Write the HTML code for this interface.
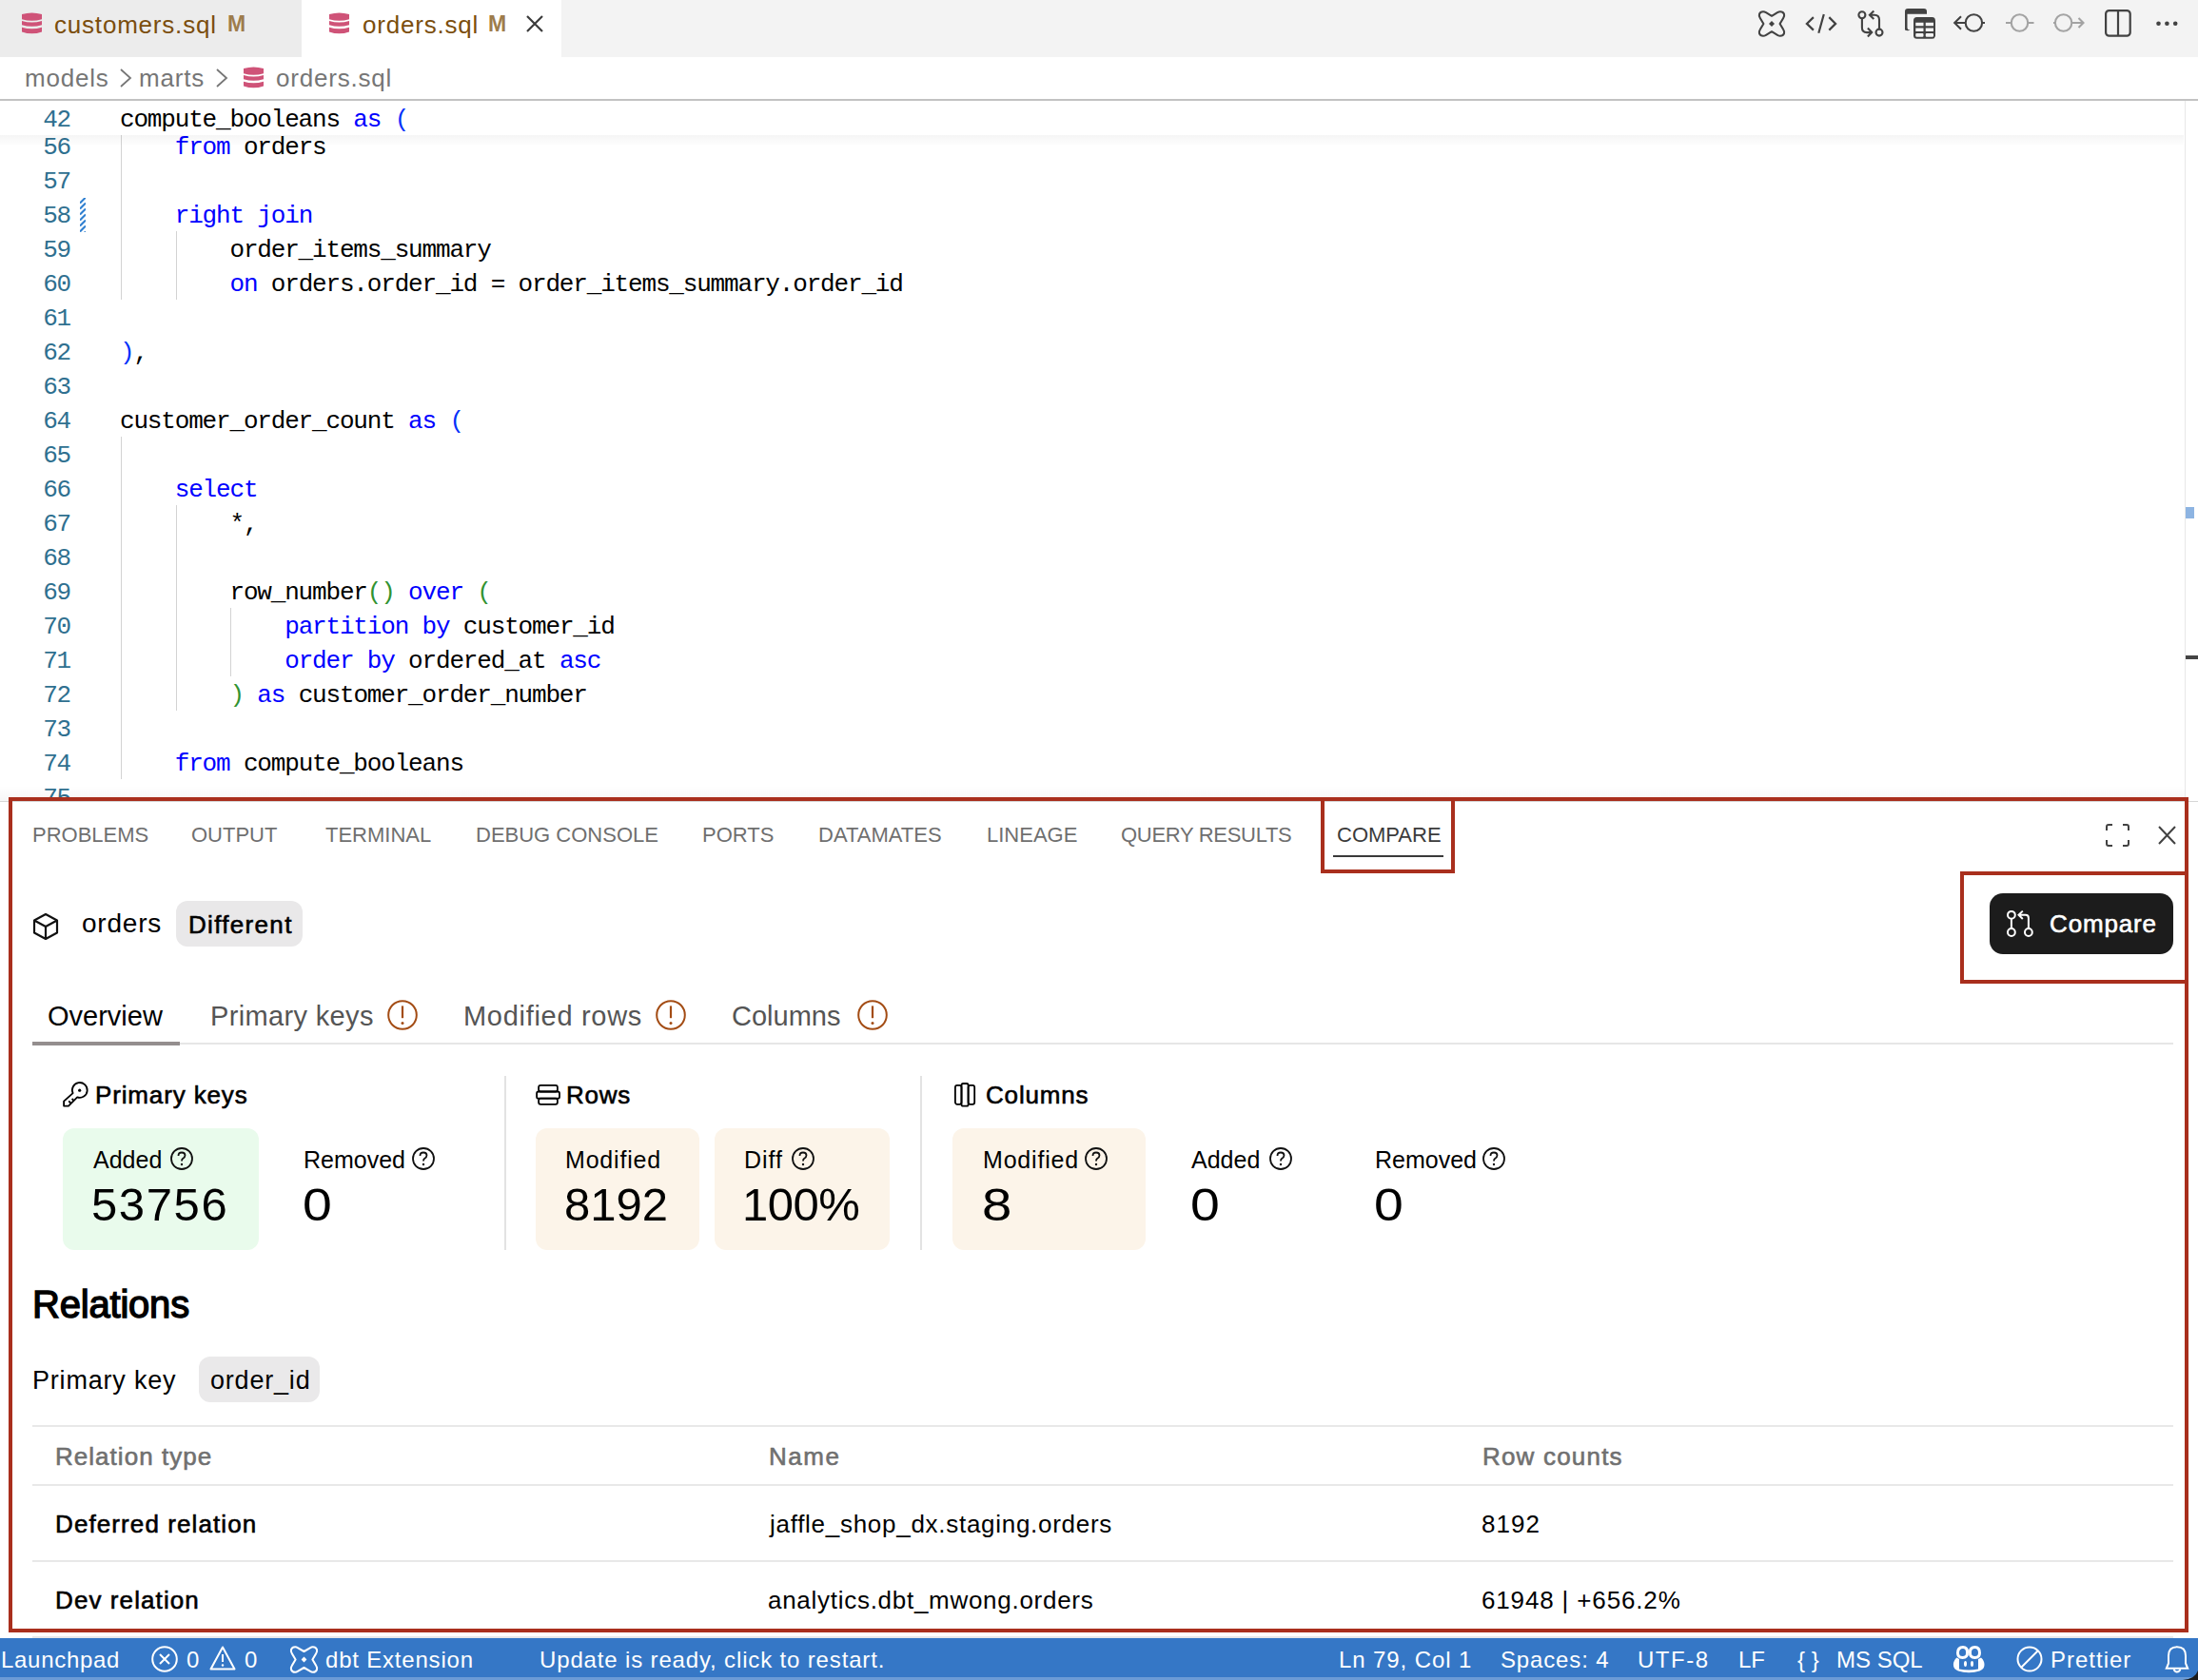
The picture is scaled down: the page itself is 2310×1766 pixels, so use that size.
<!DOCTYPE html>
<html><head><meta charset="utf-8">
<style>
html,body{margin:0;padding:0;}
body{width:2310px;height:1766px;position:relative;overflow:hidden;background:#fff;font-family:"Liberation Sans",sans-serif;}
.a{position:absolute;}
.t{position:absolute;white-space:pre;line-height:1;}
.m{font-family:"Liberation Mono",monospace;}
svg{position:absolute;overflow:visible;}
/* code */
.ln{position:absolute;left:0;margin-top:2px;width:74px;text-align:right;letter-spacing:-1.17px;font:26px/36px "Liberation Mono",monospace;color:#2f7090;white-space:pre;}
.cd{position:absolute;left:126px;margin-top:2px;letter-spacing:-1.17px;font:26px/36px "Liberation Mono",monospace;color:#000;white-space:pre;}
.sb{-webkit-text-stroke:0.6px currentColor}
.k{color:#0000ff}
.p1{color:#0431fa}
.p2{color:#319331}
.g{position:absolute;width:1px;background:#d3d3d3;}
</style></head>
<body>

<!-- ============ TAB BAR ============ -->
<div class="a" style="left:0;top:0;width:2310px;height:60px;background:#f3f3f3"></div>
<div class="a" style="left:0;top:0;width:317px;height:60px;background:#ececec"></div>
<div class="a" style="left:317px;top:0;width:273px;height:60px;background:#ffffff"></div>

<!-- db icon tab1 -->
<svg style="left:23px;top:13px" width="21" height="23" viewBox="0 0 21 23"><g fill="#cf5378"><path d="M0 2Q10.5 -1.2 21 2V7.3Q10.5 10.3 0 7.3Z"/><path d="M0 8.9Q10.5 11.9 21 8.9V13.2Q10.5 16.4 0 13.2Z"/><path d="M0 15.8Q10.5 18.8 21 15.8V20.4Q10.5 24.3 0 20.4Z"/></g></svg>
<div class="t" style="left:57px;top:13px;font-size:26px;color:#7b4e0e;letter-spacing:0.8px">customers.sql</div>
<div class="t" style="left:239px;top:14px;font-size:23px;font-weight:bold;color:#9e7c4c">M</div>

<svg style="left:346px;top:13px" width="21" height="23" viewBox="0 0 21 23"><g fill="#cf5378"><path d="M0 2Q10.5 -1.2 21 2V7.3Q10.5 10.3 0 7.3Z"/><path d="M0 8.9Q10.5 11.9 21 8.9V13.2Q10.5 16.4 0 13.2Z"/><path d="M0 15.8Q10.5 18.8 21 15.8V20.4Q10.5 24.3 0 20.4Z"/></g></svg>
<div class="t" style="left:381px;top:13px;font-size:26px;color:#7b4e0e;letter-spacing:0.8px">orders.sql</div>
<div class="t" style="left:513px;top:14px;font-size:23px;font-weight:bold;color:#9e7c4c">M</div>
<svg style="left:553px;top:16px" width="18" height="18" viewBox="0 0 18 18"><path d="M1 1L17 17M17 1L1 17" stroke="#3b3b3b" stroke-width="2.2"/></svg>

<!-- right toolbar icons -->
<svg style="left:1848px;top:11px" width="28" height="28" viewBox="0 0 28 28" fill="none" stroke="#424242" stroke-width="2.1" stroke-linejoin="round">
 <path d="M5 1.2Q2 1.2 1 3.8Q0.4 5.8 1.8 8L5.4 14L1.8 20Q0.4 22.2 1 24.2Q2 26.8 5 26.8Q6.4 26.8 8 25.8L14 22.2L20 25.8Q21.6 26.8 23 26.8Q26 26.8 27 24.2Q27.6 22.2 26.2 20L22.6 14L26.2 8Q27.6 5.8 27 3.8Q26 1.2 23 1.2Q21.6 1.2 20 2.2L14 5.8L8 2.2Q6.4 1.2 5 1.2Z"/>
 <path d="M14 11L17 14L14 17L11 14Z" fill="#424242" stroke="none"/>
</svg>
<svg style="left:1898px;top:10px" width="34" height="28" viewBox="0 0 34 28" fill="none" stroke="#424242" stroke-width="2.2">
 <path d="M7.9 8.1L0.9 14.9L7.9 21.6M24.3 8.1L31.1 14.9L24.3 21.6M18.8 5L13.3 24.8"/>
</svg>
<svg style="left:1950px;top:10px" width="32" height="30" viewBox="0 0 32 30" fill="none" stroke="#424242" stroke-width="2.1">
 <circle cx="6.9" cy="5.8" r="3.5"/><circle cx="25" cy="24.1" r="3.5"/>
 <path d="M6.9 9.3V19Q6.9 24.1 12 24.1H16.6M12.9 19.6L17.2 24.1L12.9 28.4"/>
 <path d="M25 20.6V10.8Q25 5.8 20 5.8H15M19.3 1.5L14.9 5.8L19.3 10.1"/>
</svg>
<svg style="left:2002px;top:9px" width="34" height="34" viewBox="0 0 34 34">
 <path d="M0 22.5V3Q0 0 3 0H20Q23 0 23 3V5.75H2.5V20Q2.5 22.5 5.5 22.5V22.5Q3 24 0 22.5Z" fill="#424242"/>
 <rect x="9" y="9" width="23" height="22.75" rx="3.5" fill="#424242"/>
 <g fill="#f3f3f3"><rect x="11.25" y="14.75" width="8.25" height="3.5"/><rect x="21.75" y="14.75" width="8.25" height="3.5"/><rect x="11.25" y="20.5" width="8.25" height="3.5"/><rect x="21.75" y="20.5" width="8.25" height="3.5"/><rect x="11.25" y="26" width="8.25" height="3.75" rx="1"/><rect x="21.75" y="26" width="8.25" height="3.75" rx="1"/></g>
</svg>
<svg style="left:2050px;top:10px" width="40" height="28" viewBox="0 0 40 28" fill="none" stroke="#424242" stroke-width="2.1">
 <circle cx="24.4" cy="14" r="8.7"/><path d="M15.7 14H4.5M11 7.2L4.2 14L11 20.8M33.1 14H36"/>
</svg>
<svg style="left:2104px;top:10px" width="40" height="28" viewBox="0 0 40 28" fill="none" stroke="#a3a3a3" stroke-width="2.1">
 <circle cx="18.5" cy="14" r="8.7"/><path d="M9.8 14H4M27.2 14H33.5"/>
</svg>
<svg style="left:2154px;top:10px" width="40" height="28" viewBox="0 0 40 28" fill="none" stroke="#a3a3a3" stroke-width="2.1">
 <circle cx="14.6" cy="14" r="8.7"/><path d="M5.9 14H4M23.3 14H35.5M30.5 9L35.5 14L30.5 19"/>
</svg>
<svg style="left:2212px;top:10px" width="28" height="30" viewBox="0 0 28 30" fill="none" stroke="#424242" stroke-width="2.2">
 <rect x="1.1" y="1.1" width="25.6" height="26.6" rx="3.5"/><path d="M14 1.1V27.7"/>
</svg>
<svg style="left:2264px;top:20px" width="26" height="10" viewBox="0 0 26 10" fill="#424242">
 <circle cx="4.5" cy="4.7" r="2.3"/><circle cx="13.4" cy="4.7" r="2.3"/><circle cx="22.2" cy="4.7" r="2.3"/>
</svg>

<!-- ============ BREADCRUMBS ============ -->
<div class="t" style="left:26px;top:69px;font-size:26px;color:#767676;letter-spacing:0.8px">models</div>
<svg style="left:126px;top:72px" width="12" height="20" viewBox="0 0 12 20" fill="none" stroke="#767676" stroke-width="1.8"><path d="M1 1L11 10L1 19"/></svg>
<div class="t" style="left:146px;top:69px;font-size:26px;color:#767676;letter-spacing:0.8px">marts</div>
<svg style="left:227px;top:72px" width="12" height="20" viewBox="0 0 12 20" fill="none" stroke="#767676" stroke-width="1.8"><path d="M1 1L11 10L1 19"/></svg>
<svg style="left:256px;top:70px" width="21" height="23" viewBox="0 0 21 23"><g fill="#cf5378"><path d="M0 2Q10.5 -1.2 21 2V7.3Q10.5 10.3 0 7.3Z"/><path d="M0 8.9Q10.5 11.9 21 8.9V13.2Q10.5 16.4 0 13.2Z"/><path d="M0 15.8Q10.5 18.8 21 15.8V20.4Q10.5 24.3 0 20.4Z"/></g></svg>
<div class="t" style="left:290px;top:69px;font-size:26px;color:#767676;letter-spacing:0.8px">orders.sql</div>
<div class="a" style="left:0;top:104px;width:2310px;height:2px;background:#c2c2c2"></div>

<!-- ============ EDITOR ============ -->
<div id="editor" class="a" style="left:0;top:106px;width:2310px;height:736px;overflow:hidden">
</div>
<!-- code rows (absolute to body) -->
<div class="ln" style="top:135px">56</div><div class="cd" style="top:135px">    <span class="k">from</span> orders</div>
<div class="ln" style="top:171px">57</div>
<div class="ln" style="top:207px">58</div><div class="cd" style="top:207px">    <span class="k">right</span> <span class="k">join</span></div>
<div class="ln" style="top:243px">59</div><div class="cd" style="top:243px">        order_items_summary</div>
<div class="ln" style="top:279px">60</div><div class="cd" style="top:279px">        <span class="k">on</span> orders.order_id = order_items_summary.order_id</div>
<div class="ln" style="top:315px">61</div>
<div class="ln" style="top:351px">62</div><div class="cd" style="top:351px"><span class="p1">)</span>,</div>
<div class="ln" style="top:387px">63</div>
<div class="ln" style="top:423px">64</div><div class="cd" style="top:423px">customer_order_count <span class="k">as</span> <span class="p1">(</span></div>
<div class="ln" style="top:459px">65</div>
<div class="ln" style="top:495px">66</div><div class="cd" style="top:495px">    <span class="k">select</span></div>
<div class="ln" style="top:531px">67</div><div class="cd" style="top:531px">        *,</div>
<div class="ln" style="top:567px">68</div>
<div class="ln" style="top:603px">69</div><div class="cd" style="top:603px">        row_number<span class="p2">()</span> <span class="k">over</span> <span class="p2">(</span></div>
<div class="ln" style="top:639px">70</div><div class="cd" style="top:639px">            <span class="k">partition</span> <span class="k">by</span> customer_id</div>
<div class="ln" style="top:675px">71</div><div class="cd" style="top:675px">            <span class="k">order</span> <span class="k">by</span> ordered_at <span class="k">asc</span></div>
<div class="ln" style="top:711px">72</div><div class="cd" style="top:711px">        <span class="p2">)</span> <span class="k">as</span> customer_order_number</div>
<div class="ln" style="top:747px">73</div>
<div class="ln" style="top:783px">74</div><div class="cd" style="top:783px">    <span class="k">from</span> compute_booleans</div>
<div class="ln" style="top:819px">75</div>

<!-- indent guides -->
<div class="g" style="left:127px;top:142px;height:173px"></div>
<div class="g" style="left:185px;top:243px;height:72px"></div>
<div class="g" style="left:127px;top:459px;height:360px"></div>
<div class="g" style="left:185px;top:531px;height:216px"></div>
<div class="g" style="left:242px;top:639px;height:72px"></div>

<!-- dirty diff marker line 58 -->
<svg style="left:84px;top:208px" width="6" height="36" viewBox="0 0 6 36"><defs><clipPath id="dc"><rect width="6" height="36"/></clipPath></defs><path clip-path="url(#dc)" d="M0 5.5L6 -0.5M0 11.5L6 5.5M0 17.5L6 11.5M0 23.5L6 17.5M0 29.5L6 23.5M0 35.5L6 29.5M0 41.5L6 35.5" stroke="#2f7fd0" stroke-width="2.1"/></svg>

<!-- sticky line 42 -->
<div class="a" style="left:0;top:106px;width:2295px;height:36px;background:#fff"></div>
<div class="a" style="left:0;top:142px;width:2295px;height:12px;background:linear-gradient(rgba(0,0,0,0.04),rgba(0,0,0,0))"></div>
<div class="ln" style="top:106px">42</div><div class="cd" style="top:106px">compute_booleans <span class="k">as</span> <span class="p1">(</span></div>

<!-- scrollbar border & marks -->
<div class="a" style="left:2296px;top:106px;width:1px;height:736px;background:#e8e8e8"></div>
<div class="a" style="left:2297px;top:533px;width:9px;height:12px;background:#8db4e2"></div>
<div class="a" style="left:2297px;top:689px;width:13px;height:4px;background:#444"></div>

<!-- ============ PANEL ============ -->
<div class="a" style="left:0;top:826px;width:2296px;height:16px;background:linear-gradient(rgba(0,0,0,0),rgba(0,0,0,0.035))"></div>
<div class="a" style="left:0;top:842px;width:2310px;height:880px;background:#fff;border-top:1px solid #d6d6d6;box-sizing:border-box"></div>

<div class="t" style="left:34px;top:867px;font-size:22px;color:#6f6f6f">PROBLEMS</div>
<div class="t" style="left:201px;top:867px;font-size:22px;color:#6f6f6f">OUTPUT</div>
<div class="t" style="left:342px;top:867px;font-size:22px;color:#6f6f6f">TERMINAL</div>
<div class="t" style="left:500px;top:867px;font-size:22px;color:#6f6f6f">DEBUG CONSOLE</div>
<div class="t" style="left:738px;top:867px;font-size:22px;color:#6f6f6f">PORTS</div>
<div class="t" style="left:860px;top:867px;font-size:22px;color:#6f6f6f">DATAMATES</div>
<div class="t" style="left:1037px;top:867px;font-size:22px;color:#6f6f6f">LINEAGE</div>
<div class="t" style="left:1178px;top:867px;font-size:22px;color:#6f6f6f;letter-spacing:-0.3px">QUERY RESULTS</div>
<div class="t" style="left:1405px;top:867px;font-size:22px;color:#3b3b3b">COMPARE</div>
<div class="a" style="left:1401px;top:899px;width:116px;height:2px;background:#3a3a3a"></div>

<svg style="left:2213px;top:866px" width="25" height="24" viewBox="0 0 25 24" fill="none" stroke="#424242" stroke-width="2"><path d="M1 7V3Q1 1 3 1H7M18 1H22Q24 1 24 3V7M24 17V21Q24 23 22 23H18M7 23H3Q1 23 1 21V17"/></svg>
<svg style="left:2268px;top:869px" width="19" height="18" viewBox="0 0 19 18" fill="none" stroke="#424242" stroke-width="2"><path d="M1 0L18 18M18 0L1 18"/></svg>

<!-- header row -->
<svg style="left:35px;top:960px" width="26" height="28" viewBox="0 0 26 28" fill="none" stroke="#111" stroke-width="2.2" stroke-linejoin="round"><path d="M13 1L25 7.5V20.5L13 27L1 20.5V7.5Z M1 7.5L13 14L25 7.5 M13 14V27"/></svg>
<div class="t" style="left:86px;top:957px;font-size:28px;color:#000;letter-spacing:0.8px">orders</div>
<div class="a" style="left:185px;top:947px;width:133px;height:48px;background:#e9e8e9;border-radius:12px"></div>
<div class="t sb" style="left:198px;top:959px;font-size:26px;color:#000;letter-spacing:1.32px">Different</div>

<div class="a" style="left:2091px;top:939px;width:193px;height:64px;background:#1c1c1c;border-radius:14px"></div>
<svg style="left:2108px;top:957px" width="30" height="30" viewBox="0 0 30 30" fill="none" stroke="#fff" stroke-width="2"><circle cx="5.9" cy="4.8" r="3.9"/><circle cx="5.9" cy="23" r="3.9"/><circle cx="23.9" cy="23" r="3.9"/><path d="M5.9 8.7V19.1M23.9 19.1V8Q23.9 4.8 20.7 4.8H13.6M17.8 0.6L13.5 4.8L17.8 9"/></svg>
<div class="t sb" style="left:2154px;top:958px;font-size:26px;color:#fff;letter-spacing:0.85px">Compare</div>

<!-- sub tabs -->
<div class="t" style="left:50px;top:1054px;font-size:29px;color:#000">Overview</div>
<div class="t" style="left:221px;top:1054px;font-size:29px;color:#555;letter-spacing:0.35px">Primary keys</div>
<svg style="left:407px;top:1051px" width="32" height="32" viewBox="0 0 32 32" fill="none" stroke="#a34c14" stroke-width="2"><circle cx="16" cy="16" r="14.8"/><path d="M16 6.4V19.2" stroke-width="2.2"/><circle cx="16" cy="24.6" r="1.5" fill="#a34c14" stroke="none"/></svg>
<div class="t" style="left:487px;top:1054px;font-size:29px;color:#555;letter-spacing:0.7px">Modified rows</div>
<svg style="left:689px;top:1051px" width="32" height="32" viewBox="0 0 32 32" fill="none" stroke="#a34c14" stroke-width="2"><circle cx="16" cy="16" r="14.8"/><path d="M16 6.4V19.2" stroke-width="2.2"/><circle cx="16" cy="24.6" r="1.5" fill="#a34c14" stroke="none"/></svg>
<div class="t" style="left:769px;top:1054px;font-size:29px;color:#555">Columns</div>
<svg style="left:901px;top:1051px" width="32" height="32" viewBox="0 0 32 32" fill="none" stroke="#a34c14" stroke-width="2"><circle cx="16" cy="16" r="14.8"/><path d="M16 6.4V19.2" stroke-width="2.2"/><circle cx="16" cy="24.6" r="1.5" fill="#a34c14" stroke="none"/></svg>
<div class="a" style="left:34px;top:1096px;width:2250px;height:2px;background:#e6e6e6"></div>
<div class="a" style="left:34px;top:1095px;width:155px;height:4px;background:#948e8e"></div>

<!-- stats: primary keys -->
<svg style="left:60px;top:1130px" width="40" height="40" viewBox="0 0 40 40" fill="none" stroke="#000" stroke-width="1.8" stroke-linejoin="round"><path d="M16.6 19.2A7.9 7.9 0 1 1 21.2 23.4L12 32.6H7.1V27.7Z"/><path d="M12.2 27.4L14.3 29.5M15.6 25L17.3 26.7"/><circle cx="23.7" cy="16.2" r="1.6" fill="#000" stroke="none"/></svg>
<div class="t sb" style="left:100px;top:1138px;font-size:26px;color:#000;letter-spacing:0.86px">Primary keys</div>

<div class="a" style="left:66px;top:1186px;width:206px;height:128px;background:#e9fbec;border-radius:12px"></div>
<div class="t" style="left:98px;top:1207px;font-size:25px;color:#000">Added</div>
<svg style="left:179px;top:1206px" width="24" height="24" viewBox="0 0 24 24" fill="none" stroke="#111" stroke-width="1.8"><circle cx="12" cy="12" r="11"/><path d="M8.5 9Q8.5 5.5 12 5.5Q15.5 5.5 15.5 8.5Q15.5 10.5 13 12Q12 12.7 12 14.5"/><circle cx="12" cy="18" r="1.2" fill="#111" stroke="none"/></svg>
<div class="t" style="left:96px;top:1242px;font-size:49px;color:#000;letter-spacing:1.6px">53756</div>

<div class="t" style="left:319px;top:1207px;font-size:25px;color:#000">Removed</div>
<svg style="left:433px;top:1206px" width="24" height="24" viewBox="0 0 24 24" fill="none" stroke="#111" stroke-width="1.8"><circle cx="12" cy="12" r="11"/><path d="M8.5 9Q8.5 5.5 12 5.5Q15.5 5.5 15.5 8.5Q15.5 10.5 13 12Q12 12.7 12 14.5"/><circle cx="12" cy="18" r="1.2" fill="#111" stroke="none"/></svg>
<div class="t" style="left:318px;top:1242px;font-size:49px;color:#000;transform:scaleX(1.13);transform-origin:0 0">0</div>

<div class="a" style="left:530px;top:1131px;width:2px;height:183px;background:#e3e3e3"></div>

<!-- rows -->
<svg style="left:555px;top:1130px" width="40" height="40" viewBox="0 0 40 40" fill="none" stroke="#000" stroke-width="1.8"><rect x="11.1" y="10.9" width="19.8" height="6.6" rx="2"/><rect x="9.1" y="17.5" width="23.9" height="7.2" rx="1.8"/><rect x="11.1" y="24.7" width="19.8" height="6.1" rx="2"/></svg>
<div class="t sb" style="left:595px;top:1138px;font-size:26px;color:#000;letter-spacing:0.77px">Rows</div>

<div class="a" style="left:563px;top:1186px;width:172px;height:128px;background:#fcf4e9;border-radius:12px"></div>
<div class="t" style="left:594px;top:1207px;font-size:25px;color:#000;letter-spacing:0.8px">Modified</div>
<div class="t" style="left:593px;top:1242px;font-size:49px;color:#000">8192</div>

<div class="a" style="left:751px;top:1186px;width:184px;height:128px;background:#fcf4e9;border-radius:12px"></div>
<div class="t" style="left:782px;top:1207px;font-size:25px;color:#000;letter-spacing:1px">Diff</div>
<svg style="left:832px;top:1206px" width="24" height="24" viewBox="0 0 24 24" fill="none" stroke="#111" stroke-width="1.8"><circle cx="12" cy="12" r="11"/><path d="M8.5 9Q8.5 5.5 12 5.5Q15.5 5.5 15.5 8.5Q15.5 10.5 13 12Q12 12.7 12 14.5"/><circle cx="12" cy="18" r="1.2" fill="#111" stroke="none"/></svg>
<div class="t" style="left:780px;top:1242px;font-size:49px;color:#000;letter-spacing:-0.5px">100%</div>

<div class="a" style="left:967px;top:1131px;width:2px;height:183px;background:#e3e3e3"></div>

<!-- columns -->
<svg style="left:995px;top:1130px" width="40" height="40" viewBox="0 0 40 40" fill="none" stroke="#000" stroke-width="1.8"><rect x="8.9" y="10.9" width="6.6" height="19.9" rx="2"/><rect x="22.6" y="10.9" width="6.6" height="19.9" rx="2"/><rect x="15.5" y="9" width="7.1" height="23.7" rx="1.8"/></svg>
<div class="t sb" style="left:1036px;top:1138px;font-size:26px;color:#000;letter-spacing:0.83px">Columns</div>

<div class="a" style="left:1001px;top:1186px;width:203px;height:128px;background:#fcf4e9;border-radius:12px"></div>
<div class="t" style="left:1033px;top:1207px;font-size:25px;color:#000;letter-spacing:0.8px">Modified</div>
<svg style="left:1140px;top:1206px" width="24" height="24" viewBox="0 0 24 24" fill="none" stroke="#111" stroke-width="1.8"><circle cx="12" cy="12" r="11"/><path d="M8.5 9Q8.5 5.5 12 5.5Q15.5 5.5 15.5 8.5Q15.5 10.5 13 12Q12 12.7 12 14.5"/><circle cx="12" cy="18" r="1.2" fill="#111" stroke="none"/></svg>
<div class="t" style="left:1032px;top:1242px;font-size:49px;color:#000;transform:scaleX(1.15);transform-origin:0 0">8</div>

<div class="t" style="left:1252px;top:1207px;font-size:25px;color:#000">Added</div>
<svg style="left:1334px;top:1206px" width="24" height="24" viewBox="0 0 24 24" fill="none" stroke="#111" stroke-width="1.8"><circle cx="12" cy="12" r="11"/><path d="M8.5 9Q8.5 5.5 12 5.5Q15.5 5.5 15.5 8.5Q15.5 10.5 13 12Q12 12.7 12 14.5"/><circle cx="12" cy="18" r="1.2" fill="#111" stroke="none"/></svg>
<div class="t" style="left:1251px;top:1242px;font-size:49px;color:#000;transform:scaleX(1.13);transform-origin:0 0">0</div>

<div class="t" style="left:1445px;top:1207px;font-size:25px;color:#000">Removed</div>
<svg style="left:1558px;top:1206px" width="24" height="24" viewBox="0 0 24 24" fill="none" stroke="#111" stroke-width="1.8"><circle cx="12" cy="12" r="11"/><path d="M8.5 9Q8.5 5.5 12 5.5Q15.5 5.5 15.5 8.5Q15.5 10.5 13 12Q12 12.7 12 14.5"/><circle cx="12" cy="18" r="1.2" fill="#111" stroke="none"/></svg>
<div class="t" style="left:1444px;top:1242px;font-size:49px;color:#000;transform:scaleX(1.13);transform-origin:0 0">0</div>

<!-- relations -->
<div class="t sb" style="left:34px;top:1351px;font-size:40px;color:#000;letter-spacing:-0.2px;-webkit-text-stroke:1.4px #000">Relations</div>
<div class="t" style="left:34px;top:1438px;font-size:27px;color:#000;letter-spacing:0.8px">Primary key</div>
<div class="a" style="left:209px;top:1426px;width:127px;height:48px;background:#eae9ea;border-radius:12px"></div>
<div class="t" style="left:221px;top:1438px;font-size:27px;color:#000;letter-spacing:0.8px">order_id</div>

<div class="a" style="left:34px;top:1498px;width:2250px;height:2px;background:#e8e8e8"></div>
<div class="t sb" style="left:58px;top:1518px;font-size:26px;color:#707070;letter-spacing:1.03px">Relation type</div>
<div class="t sb" style="left:808px;top:1518px;font-size:26px;color:#707070;letter-spacing:1.53px">Name</div>
<div class="t sb" style="left:1558px;top:1518px;font-size:26px;color:#707070;letter-spacing:1.19px">Row counts</div>
<div class="a" style="left:34px;top:1560px;width:2250px;height:2px;background:#e8e8e8"></div>
<div class="t sb" style="left:58px;top:1589px;font-size:26px;color:#000;letter-spacing:1.1px">Deferred relation</div>
<div class="t" style="left:809px;top:1589px;font-size:26px;color:#000;letter-spacing:0.72px">jaffle_shop_dx.staging.orders</div>
<div class="t" style="left:1557px;top:1589px;font-size:26px;color:#000;letter-spacing:1px">8192</div>
<div class="a" style="left:34px;top:1640px;width:2250px;height:2px;background:#e8e8e8"></div>
<div class="t sb" style="left:58px;top:1669px;font-size:26px;color:#000;letter-spacing:1.1px">Dev relation</div>
<div class="t" style="left:807px;top:1669px;font-size:26px;color:#000;letter-spacing:0.72px">analytics.dbt_mwong.orders</div>
<div class="t" style="left:1557px;top:1669px;font-size:26px;color:#000;letter-spacing:0.85px">61948 | +656.2%</div>
<div class="a" style="left:34px;top:1720px;width:2250px;height:2px;background:#e8e8e8"></div>

<!-- ============ STATUS BAR ============ -->
<div class="a" style="left:0;top:1722px;width:2310px;height:44px;background:#3577c6"></div>
<div class="a" style="left:0;top:1763px;width:2310px;height:3px;background:#6b9bd6"></div>
<div class="t" style="left:1px;top:1733px;font-size:24px;color:#fff;letter-spacing:0.7px">Launchpad</div>
<svg style="left:159px;top:1730px" width="28" height="28" viewBox="0 0 28 28" fill="none" stroke="#fff" stroke-width="2"><circle cx="14" cy="14" r="12.8"/><path d="M9 9L19 19M19 9L9 19"/></svg>
<div class="t" style="left:196px;top:1733px;font-size:24px;color:#fff">0</div>
<svg style="left:220px;top:1730px" width="28" height="26" viewBox="0 0 28 26" fill="none" stroke="#fff" stroke-width="2" stroke-linejoin="round"><path d="M14 1.5L26.5 24.5H1.5Z"/><path d="M14 9V17"/><circle cx="14" cy="20.5" r="1.2" fill="#fff" stroke="none"/></svg>
<div class="t" style="left:257px;top:1733px;font-size:24px;color:#fff">0</div>
<svg style="left:305px;top:1730px" width="29" height="29" viewBox="0 0 28 28" fill="none" stroke="#fff" stroke-width="2" stroke-linejoin="round">
 <path d="M5 1.2Q2 1.2 1 3.8Q0.4 5.8 1.8 8L5.4 14L1.8 20Q0.4 22.2 1 24.2Q2 26.8 5 26.8Q6.4 26.8 8 25.8L14 22.2L20 25.8Q21.6 26.8 23 26.8Q26 26.8 27 24.2Q27.6 22.2 26.2 20L22.6 14L26.2 8Q27.6 5.8 27 3.8Q26 1.2 23 1.2Q21.6 1.2 20 2.2L14 5.8L8 2.2Q6.4 1.2 5 1.2Z"/>
 <path d="M14 11.2L16.8 14L14 16.8L11.2 14Z" fill="#fff" stroke="none"/>
</svg>
<div class="t" style="left:342px;top:1733px;font-size:24px;color:#fff;letter-spacing:0.8px">dbt Extension</div>
<div class="t" style="left:567px;top:1733px;font-size:24px;color:#fff;letter-spacing:0.85px">Update is ready, click to restart.</div>

<div class="t" style="left:1407px;top:1733px;font-size:24px;color:#fff;letter-spacing:0.9px">Ln 79, Col 1</div>
<div class="t" style="left:1577px;top:1733px;font-size:24px;color:#fff;letter-spacing:0.85px">Spaces: 4</div>
<div class="t" style="left:1721px;top:1733px;font-size:24px;color:#fff;letter-spacing:1.5px">UTF-8</div>
<div class="t" style="left:1827px;top:1733px;font-size:24px;color:#fff">LF</div>
<div class="t" style="left:1889px;top:1733px;font-size:24px;color:#fff">{ }</div>
<div class="t" style="left:1930px;top:1733px;font-size:24px;color:#fff">MS SQL</div>
<svg style="left:2045px;top:1724px" width="48" height="40" viewBox="0 0 48 40"><g fill="none" stroke="#fff" stroke-width="3"><path d="M18 7.5Q12.5 7.5 12.5 13.5Q12.5 18.5 17.5 18.5Q23 18.5 22.5 12.5Q22.5 7.5 18 7.5Z"/><path d="M30.5 7.5Q35.5 7.5 35.5 13.5Q35.5 18.5 30.5 18.5Q25 18.5 25.5 12.5Q25.5 7.5 30.5 7.5Z"/></g><path fill="#fff" d="M11.5 18.5Q7.9 21.5 7.9 26Q7.9 30.5 13 32.5Q18 34.3 24.2 34.3Q30.5 34.3 35.5 32.5Q40.5 30.5 40.5 26Q40.5 21.5 37 18.5L34 20V30.5Q29.5 31.5 24.2 31.5Q18.5 31.5 14 30.5V20Z"/><ellipse cx="20.5" cy="24.9" rx="1.5" ry="3" fill="#fff"/><ellipse cx="27.5" cy="24.9" rx="1.5" ry="3" fill="#fff"/></svg>
<svg style="left:2119px;top:1730px" width="28" height="28" viewBox="0 0 28 28" fill="none" stroke="#fff" stroke-width="2"><circle cx="14" cy="14" r="12.5"/><path d="M5 23L23 5"/></svg>
<div class="t" style="left:2155px;top:1733px;font-size:24px;color:#fff;letter-spacing:1px">Prettier</div>
<svg style="left:2276px;top:1730px" width="24" height="30" viewBox="0 0 24 30" fill="none" stroke="#fff" stroke-width="2"><path d="M12 1.2Q3 1.2 3 10.5V18.5L0.8 23.8H23.2L21 18.5V10.5Q21 1.2 12 1.2Z"/><path d="M8.6 24.5Q9.5 27.6 12 27.6Q14.5 27.6 15.4 24.5"/></svg>
<svg style="left:2290px;top:1750px" width="20" height="16" viewBox="0 0 20 16"><path d="M20 6Q17 15 4 16H20Z" fill="#1b1b1b"/></svg>

<!-- ============ RED ANNOTATIONS ============ -->
<div class="a" style="left:9px;top:838px;width:2291px;height:878px;border:4px solid #a92f1d;box-sizing:border-box"></div>
<div class="a" style="left:1388px;top:838px;width:141px;height:80px;border:4px solid #a92f1d;box-sizing:border-box"></div>
<div class="a" style="left:2060px;top:916px;width:240px;height:118px;border:4px solid #a92f1d;box-sizing:border-box"></div>

</body></html>
